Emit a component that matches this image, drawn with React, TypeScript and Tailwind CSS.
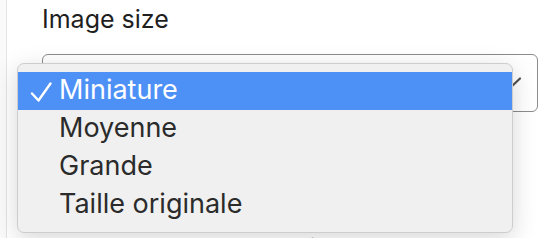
import React from "react";

const options = ["Miniature", "Moyenne", "Grande", "Taille originale"];

function Check() {
  return (
    <svg width="22" height="22" viewBox="0 0 22 22" fill="none" className="shrink-0">
      <path d="M2 12.5 L8.5 19.5 L20.5 2.5" stroke="white" strokeWidth="2.4" strokeLinecap="round" strokeLinejoin="round" />
    </svg>
  );
}

export default function App() {
  const selected = 0;

  return (
    <div className="relative w-[545px] h-[238px] overflow-hidden bg-white font-['Inter','Liberation_Sans',sans-serif]">
      <div className="flex h-full">
        <div className="w-[7px] bg-[#fafafa] border-r border-[#e4e4e4]" />
        <div className="flex-1 pl-[35px] pr-[7px] pt-1">
          <div className="text-[25px] leading-[30px] text-[#1f1f1f]">Image size</div>
          <div className="mt-5 h-[58px] rounded-[6px] border-[1.5px] border-[#8c8c8c] flex items-center justify-end pr-4">
            <svg width="20" height="12" viewBox="0 0 20 12" fill="none">
              <path d="M1 1.5 L10 10 L19 1.5" stroke="#505050" strokeWidth="2.2" strokeLinecap="round" strokeLinejoin="round" />
            </svg>
          </div>
          <div className="mt-[122px] text-[26px] leading-[30px] text-[#1f1f1f]">Aucune marge sur la ligne</div>
        </div>
      </div>

      <div className="absolute left-[17px] top-[63px] w-[496px] rounded-[7px] border border-[#cdcdcd] bg-[#f0f0f0] py-2 shadow-[0_6px_24px_rgba(0,0,0,0.16)]">
        {options.map((opt, i) => (
          <div
            key={opt}
            className={
              i === selected
                ? "flex h-[38px] items-center bg-[#4d90f6] pl-3 text-white"
                : "flex h-[38px] items-center pl-3 text-[#2b2b2b]"
            }
          >
            <div className="w-[29px] pt-[2px]">{i === selected && <Check />}</div>
            <span className="text-[27px] leading-[34px] -mt-[3px]">{opt}</span>
          </div>
        ))}
      </div>
    </div>
  );
}
